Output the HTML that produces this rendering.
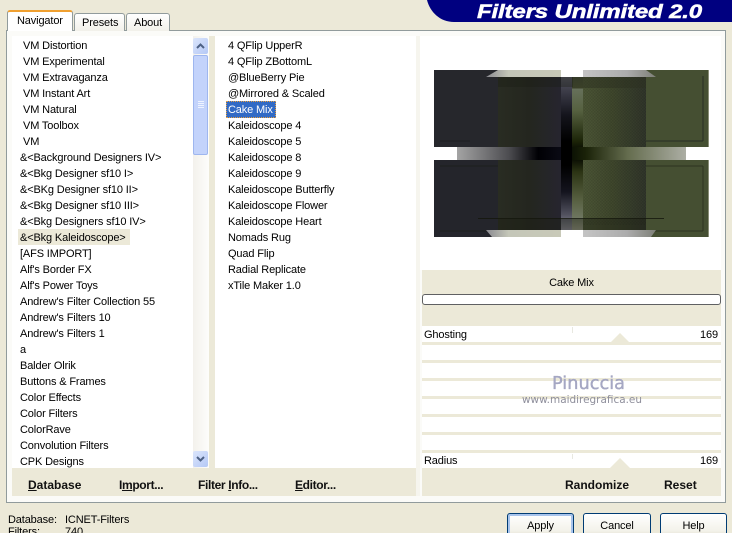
<!DOCTYPE html>
<html style="height:533px;overflow:hidden"><head><meta charset="utf-8"><style>
html,body{margin:0;padding:0}
body{width:732px;height:533px;overflow:hidden;background:#ece9d8;position:relative;font-family:"Liberation Sans",sans-serif;font-size:11px;letter-spacing:-.14px;color:#000}
#w{left:0;top:0;width:732px;height:533px;overflow:hidden}
div,svg{position:absolute}
.t{white-space:nowrap;line-height:16px;height:16px;margin-top:1px}
.b{font-weight:bold;font-size:12px;white-space:nowrap;line-height:16px;color:#111;letter-spacing:0}
.s{letter-spacing:-.35px}
.l{left:422px;width:299px;height:3px;background:#ece9d8}
.btn{top:513px;height:24px;border:1px solid #003c74;border-radius:3px;background:linear-gradient(#fff,#f3f2ea 70%,#dcd8c8);text-align:center;line-height:24px;box-sizing:content-box}
</style></head><body><div id="w">
<!-- header -->
<svg style="left:420px;top:0" width="312" height="24"><path d="M7 0H312V22H34C20 22 10 12 7 0Z" fill="#000080"/><text x="57" y="18" font-family="Liberation Sans" font-weight="bold" font-style="italic" font-size="19" fill="#fff" stroke="#fff" stroke-width=".5" textLength="225" lengthAdjust="spacingAndGlyphs">Filters Unlimited 2.0</text></svg>
<!-- panel -->
<div style="left:6px;top:30px;width:718px;height:471px;border:1px solid #919b9c;background:#fbfbf8"></div>
<!-- tabs -->
<div style="left:7px;top:10px;width:66px;height:21px;background:#fff;border:1px solid #919b9c;border-bottom:0;border-radius:3px 3px 0 0;border-top:2px solid #f0a030;box-sizing:border-box"></div>
<div class="t" style="left:17px;top:12px;">Navigator</div>
<div style="left:74px;top:13px;width:49px;height:17px;background:linear-gradient(#fff,#f2f1ea);border:1px solid #919b9c;border-bottom:0;border-radius:3px 3px 0 0"></div>
<div class="t" style="left:82px;top:14px">Presets</div>
<div style="left:126px;top:13px;width:42px;height:17px;background:linear-gradient(#fff,#f2f1ea);border:1px solid #919b9c;border-bottom:0;border-radius:3px 3px 0 0"></div>
<div class="t" style="left:134px;top:14px">About</div>
<!-- lists -->
<div style="left:12px;top:36px;width:181px;height:432px;background:#fff"></div>
<div style="left:209px;top:36px;width:6px;height:432px;background:#ece9d8"></div>
<div style="left:215px;top:36px;width:201px;height:432px;background:#fff"></div>
<div style="left:416px;top:36px;width:4px;height:460px;background:#f6f5ee"></div>
<div style="left:420px;top:36px;width:301px;height:234px;background:#fff"></div>
<!-- scrollbar -->
<div style="left:193px;top:36px;width:16px;height:432px;background:linear-gradient(90deg,#f3f1ec,#fdfdfb)"></div>
<div style="left:193px;top:38px;width:15px;height:16px;background:linear-gradient(135deg,#dbe5fb,#b4c8f6);border-radius:2px"></div>
<svg style="left:193px;top:38px" width="16" height="16"><path d="M4 10L7.500 6.500L11 10" fill="none" stroke="#4d6185" stroke-width="2"/></svg>
<div style="left:193px;top:55px;width:13px;height:98px;background:#c3d3fb;border:1px solid #9eb6ef;border-radius:2px"></div>
<svg style="left:193px;top:100px" width="16" height="10"><path d="M5 1.500H11M5 3.500H11M5 5.500H11M5 7.500H11" stroke="#eef3ff" stroke-width="1"/></svg>
<div style="left:193px;top:451px;width:15px;height:16px;background:linear-gradient(135deg,#dbe5fb,#b4c8f6);border-radius:2px"></div>
<svg style="left:193px;top:451px" width="16" height="16"><path d="M4 6L7.500 9.500L11 6" fill="none" stroke="#4d6185" stroke-width="2"/></svg>
<div style="left:18px;top:229px;width:112px;height:16px;background:#ece9d8"></div>
<div class="t" style="left:23px;top:37px">VM Distortion</div>
<div class="t" style="left:23px;top:53px">VM Experimental</div>
<div class="t" style="left:23px;top:69px">VM Extravaganza</div>
<div class="t" style="left:23px;top:85px">VM Instant Art</div>
<div class="t" style="left:23px;top:101px">VM Natural</div>
<div class="t" style="left:23px;top:117px">VM Toolbox</div>
<div class="t" style="left:23px;top:133px">VM</div>
<div class="t" style="left:20px;top:149px">&amp;&lt;Background Designers IV&gt;</div>
<div class="t" style="left:20px;top:165px">&amp;&lt;Bkg Designer sf10 I&gt;</div>
<div class="t" style="left:20px;top:181px">&amp;&lt;BKg Designer sf10 II&gt;</div>
<div class="t" style="left:20px;top:197px">&amp;&lt;Bkg Designer sf10 III&gt;</div>
<div class="t" style="left:20px;top:213px">&amp;&lt;Bkg Designers sf10 IV&gt;</div>
<div class="t" style="left:20px;top:229px">&amp;&lt;Bkg Kaleidoscope&gt;</div>
<div class="t" style="left:20px;top:245px">[AFS IMPORT]</div>
<div class="t" style="left:20px;top:261px">Alf's Border FX</div>
<div class="t" style="left:20px;top:277px">Alf's Power Toys</div>
<div class="t" style="left:20px;top:293px">Andrew's Filter Collection 55</div>
<div class="t" style="left:20px;top:309px">Andrew's Filters 10</div>
<div class="t" style="left:20px;top:325px">Andrew's Filters 1</div>
<div class="t" style="left:20px;top:341px">a</div>
<div class="t" style="left:20px;top:357px">Balder Olrik</div>
<div class="t" style="left:20px;top:373px">Buttons &amp; Frames</div>
<div class="t" style="left:20px;top:389px">Color Effects</div>
<div class="t" style="left:20px;top:405px">Color Filters</div>
<div class="t" style="left:20px;top:421px">ColorRave</div>
<div class="t" style="left:20px;top:437px">Convolution Filters</div>
<div class="t" style="left:20px;top:453px">CPK Designs</div>
<div style="left:226px;top:101px;width:48px;height:15px;background:#316ac5;border:1px dotted #e8a040"></div>
<div class="t" style="left:228px;top:37px">4 QFlip UpperR</div>
<div class="t" style="left:228px;top:53px">4 QFlip ZBottomL</div>
<div class="t" style="left:228px;top:69px">@BlueBerry Pie</div>
<div class="t" style="left:228px;top:85px">@Mirrored &amp; Scaled</div>
<div class="t" style="left:228px;top:101px;color:#fff">Cake Mix</div>
<div class="t" style="left:228px;top:117px">Kaleidoscope 4</div>
<div class="t" style="left:228px;top:133px">Kaleidoscope 5</div>
<div class="t" style="left:228px;top:149px">Kaleidoscope 8</div>
<div class="t" style="left:228px;top:165px">Kaleidoscope 9</div>
<div class="t" style="left:228px;top:181px">Kaleidoscope Butterfly</div>
<div class="t" style="left:228px;top:197px">Kaleidoscope Flower</div>
<div class="t" style="left:228px;top:213px">Kaleidoscope Heart</div>
<div class="t" style="left:228px;top:229px">Nomads Rug</div>
<div class="t" style="left:228px;top:245px">Quad Flip</div>
<div class="t" style="left:228px;top:261px">Radial Replicate</div>
<div class="t" style="left:228px;top:277px">xTile Maker 1.0</div>
<!-- preview -->
<svg style="left:0;top:0" width="732" height="300">
<defs>
<linearGradient id="c1" gradientUnits="userSpaceOnUse" x1="0" y1="77" x2="0" y2="230"><stop offset="0" stop-color="#55555f"/><stop offset=".1" stop-color="#3a3a46"/><stop offset=".25" stop-color="#14141c"/><stop offset=".42" stop-color="#000"/><stop offset=".58" stop-color="#000"/><stop offset=".75" stop-color="#14141e"/><stop offset=".9" stop-color="#52525f"/><stop offset="1" stop-color="#8e8e9c"/></linearGradient>
<linearGradient id="c2" gradientUnits="userSpaceOnUse" x1="0" y1="77" x2="0" y2="230"><stop offset="0" stop-color="#343a28"/><stop offset=".07" stop-color="#3a4028"/><stop offset=".08" stop-color="#66705a"/><stop offset=".22" stop-color="#566140"/><stop offset=".42" stop-color="#1c2408"/><stop offset=".47" stop-color="#0c1004"/><stop offset=".54" stop-color="#0c1004"/><stop offset=".62" stop-color="#2c3414"/><stop offset=".8" stop-color="#565f40"/><stop offset=".92" stop-color="#6e7660"/><stop offset="1" stop-color="#9da08c"/></linearGradient>
<linearGradient id="h1"><stop offset="0" stop-color="#a4a4a4"/><stop offset=".5" stop-color="#4c4c50"/><stop offset=".78" stop-color="#000004"/><stop offset="1" stop-color="#0a0a14"/></linearGradient>
<linearGradient id="h2"><stop offset="0" stop-color="#0c1204"/><stop offset=".12" stop-color="#1a2208"/><stop offset=".5" stop-color="#666e50"/><stop offset="1" stop-color="#acaea4"/></linearGradient>
<linearGradient id="t1"><stop offset="0" stop-color="#8a8a90"/><stop offset=".3" stop-color="#c4c6b8"/><stop offset="1" stop-color="#c8c9b8"/></linearGradient>
<linearGradient id="t2"><stop offset="0" stop-color="#c4c4c4"/><stop offset=".6" stop-color="#acacac"/><stop offset="1" stop-color="#7e8078"/></linearGradient>
<linearGradient id="g1"><stop offset="0" stop-color="#292c22"/><stop offset=".5" stop-color="#24261f"/><stop offset="1" stop-color="#26252f"/></linearGradient>
<linearGradient id="g2"><stop offset="0" stop-color="#4c5636"/><stop offset=".5" stop-color="#3e462c"/><stop offset="1" stop-color="#30352a"/></linearGradient>
<pattern id="d" width="3" height="3" patternUnits="userSpaceOnUse"><rect width="1.500" height="1.500" fill="#000" opacity=".1"/><rect x="1.500" y="1.500" width="1.500" height="1.500" fill="#000" opacity=".1"/></pattern>
</defs>
<rect x="561" y="70" width="11" height="167" fill="url(#c1)"/>
<rect x="572" y="70" width="11" height="167" fill="url(#c2)"/>
<rect x="561" y="70" width="22" height="7" fill="#fff"/><rect x="561" y="230" width="22" height="7" fill="#fff"/>
<rect x="457" y="147" width="104" height="13" fill="url(#h1)"/>
<rect x="572" y="147" width="114" height="13" fill="url(#h2)"/>
<rect x="434" y="70" width="64" height="77" fill="#26272c"/><rect x="498" y="70" width="63" height="77" fill="url(#g1)"/>
<rect x="583" y="70" width="63" height="77" fill="url(#g2)"/><rect x="646" y="70" width="63" height="77" fill="#454f32"/>
<rect x="434" y="160" width="64" height="77" fill="#24252b"/><rect x="498" y="160" width="63" height="77" fill="url(#g1)"/>
<rect x="583" y="160" width="63" height="77" fill="url(#g2)"/><rect x="646" y="160" width="63" height="77" fill="#454f32"/>
<rect x="583" y="76" width="63" height="71" fill="url(#d)"/><rect x="583" y="160" width="63" height="65" fill="url(#d)"/>
<path d="M440 141H470M703 76V141M646 141H703" stroke="#16181a" stroke-width="1" fill="none" opacity=".6"/>
<path d="M440 231H490M703 166V231M650 231H703M646 166H703M440 166H498" stroke="#16180e" stroke-width="1" fill="none" opacity=".5"/>
<rect x="583" y="77" width="63" height="11" fill="#2b3020" opacity=".5"/>
<rect x="498" y="77" width="75" height="10" fill="#1a1c14" opacity=".35"/>
<rect x="478" y="218" width="186" height="1" fill="#14160c" opacity=".8"/>
<rect x="498" y="219" width="148" height="11" fill="#1c1e14" opacity=".45"/>
<path d="M486 77L498 70H561V77Z" fill="url(#t1)"/>
<path d="M583 70H646L656 77H583Z" fill="url(#t2)"/>
<path d="M486 230L492 237H561V230Z" fill="url(#t1)"/>
<path d="M583 230V237H651L656 230Z" fill="url(#t2)"/>
<rect x="708" y="70" width="1" height="77" fill="#8a8f78"/><rect x="708" y="160" width="1" height="77" fill="#8a8f78"/>
</svg>
<!-- right controls -->
<div style="left:422px;top:270px;width:299px;height:56px;background:#ece9d8"></div>
<div class="t" style="left:422px;top:274px;width:299px;text-align:center">Cake Mix</div>
<div style="left:422px;top:294px;width:297px;height:9px;background:#fff;border:1px solid #5f6062;border-radius:3px"></div>
<div style="left:422px;top:326px;width:299px;height:142px;background:#fff"></div>
<div class="l" style="top:342px"></div><div class="l" style="top:360px"></div><div class="l" style="top:378px"></div><div class="l" style="top:396px"></div><div class="l" style="top:414px"></div><div class="l" style="top:432px"></div><div class="l" style="top:450px"></div>
<svg style="left:420px;top:326px" width="312" height="145"><path d="M190 17L200 7L210 17Z" fill="#ece9d8"/><path d="M190 142L200 132L210 142Z" fill="#ece9d8"/><path d="M152.500 1V7M152.500 128V133" stroke="#e8e8e0"/></svg>
<div class="t" style="left:424px;top:326px">Ghosting</div>
<div class="t" style="left:700px;top:326px">169</div>
<div class="t" style="left:424px;top:452px">Radius</div>
<div class="t" style="left:700px;top:452px">169</div>
<svg style="left:500px;top:365px" width="170" height="45"><text x="52" y="24" font-family="DejaVu Sans" font-size="17.500" letter-spacing="0" fill="#a6a8c4" stroke="#9a9cba" stroke-width=".3" textLength="73" lengthAdjust="spacingAndGlyphs">Pinuccia</text><text x="22" y="38" font-family="DejaVu Sans" font-size="10.500" letter-spacing="0" fill="#8f8f9c" textLength="120" lengthAdjust="spacingAndGlyphs">www.maidiregrafica.eu</text></svg>
<!-- bottom bars -->
<div style="left:12px;top:468px;width:404px;height:28px;background:#ece9d8"></div>
<div style="left:422px;top:468px;width:299px;height:28px;background:#ece9d8"></div>
<div class="b" style="left:28px;top:477px"><u>D</u>atabase</div>
<div class="b s" style="left:119px;top:477px">I<u>m</u>port...</div>
<div class="b s" style="left:198px;top:477px">Filter <u>I</u>nfo...</div>
<div class="b s" style="left:295px;top:477px"><u>E</u>ditor...</div>
<div class="b" style="left:565px;top:477px">Randomize</div>
<div class="b" style="left:664px;top:477px">Reset</div>
<!-- footer -->
<div class="t" style="left:8px;top:511px">Database:</div>
<div class="t" style="left:65px;top:511px">ICNET-Filters</div>
<div class="t" style="left:8px;top:523px">Filters:</div>
<div class="t" style="left:65px;top:523px">740</div>
<div class="btn" style="left:507px;width:65px;box-shadow:inset 0 0 0 2px #a8c4ec">Apply</div>
<div class="btn" style="left:583px;width:66px">Cancel</div>
<div class="btn" style="left:660px;width:65px">Help</div>
</div></body></html>
